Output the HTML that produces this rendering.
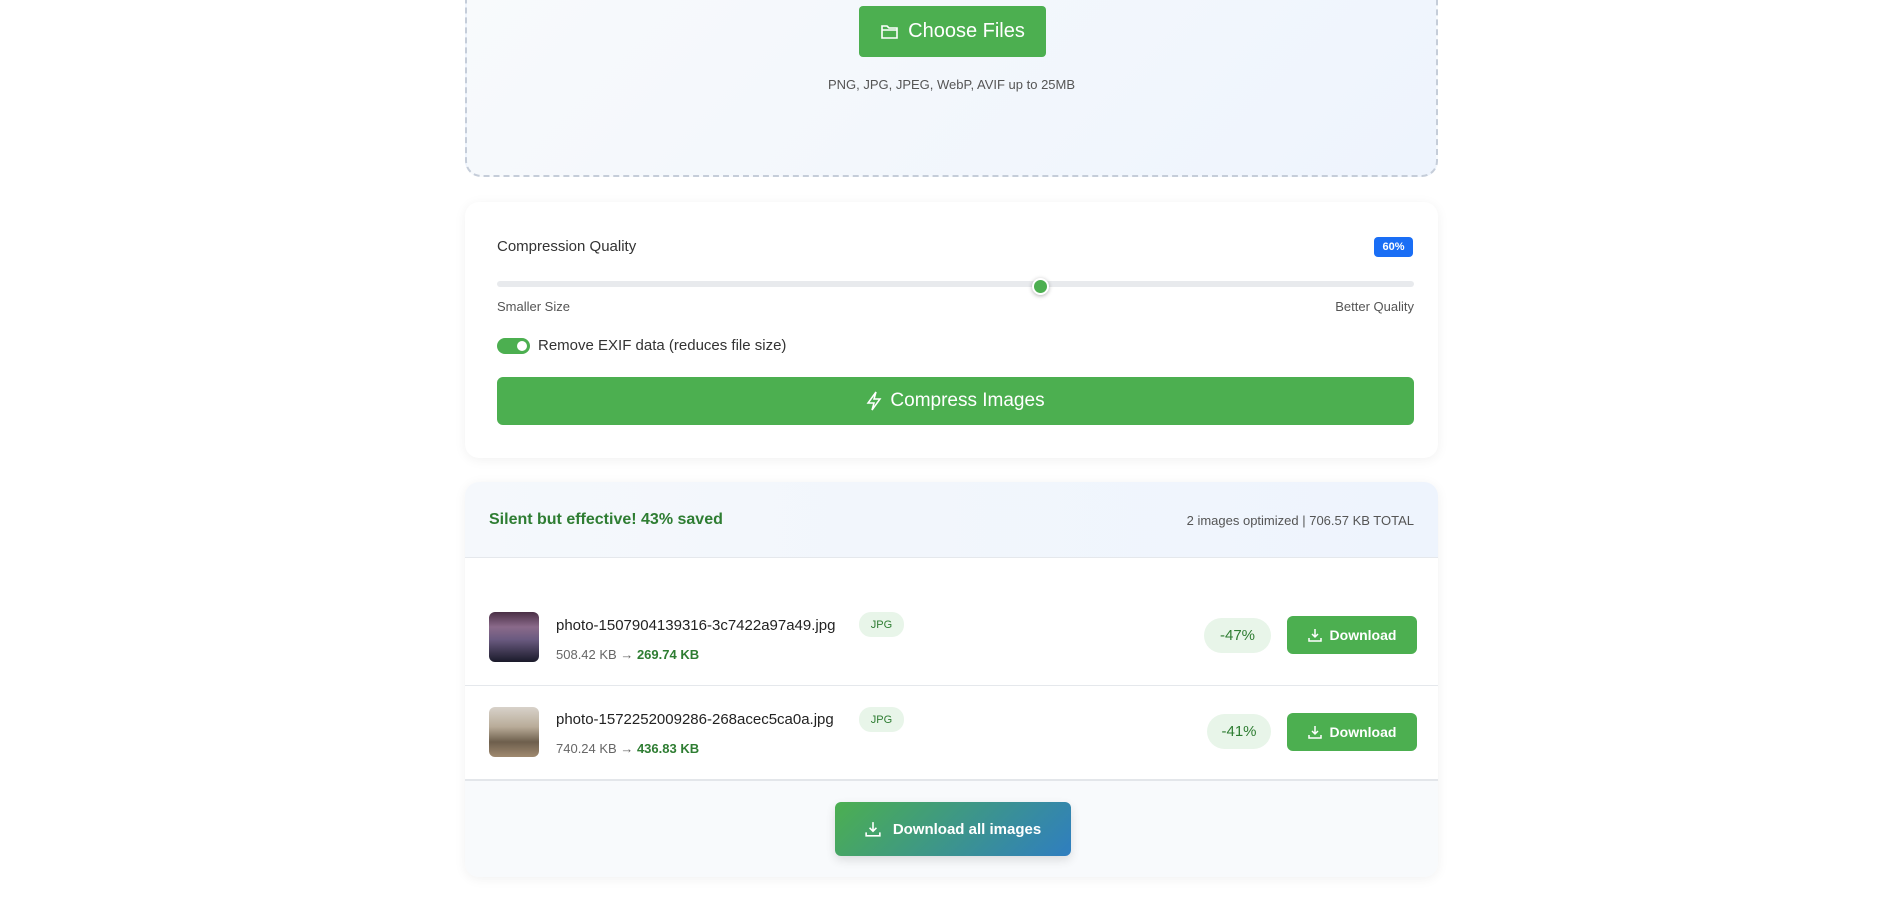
<!DOCTYPE html>
<html><head><meta charset="utf-8"><style>
*{box-sizing:border-box;margin:0;padding:0}
body{width:1900px;height:921px;background:#fff;font-family:"Liberation Sans",sans-serif;position:relative;overflow:hidden;color:#333}
.abs{position:absolute}
.drop{left:465px;top:-40px;width:973px;height:217px;border:2px dashed #c5cdd9;border-radius:16px;background:linear-gradient(135deg,#f8fafc,#eef4fd)}
.choose{left:859px;top:6px;width:187px;height:51px;background:#4caf50;border-radius:4px;color:#fff;font-size:20px;display:flex;align-items:center;justify-content:center;gap:8px}
.fmt{left:465px;width:973px;top:77px;text-align:center;font-size:13px;color:#555}
.card{left:465px;width:973px;background:#fff;border-radius:14px;box-shadow:0 2px 12px rgba(0,0,0,.06)}
.btn{background:#4caf50;color:#fff;border-radius:6px;display:flex;align-items:center;justify-content:center;gap:8px}
</style></head><body>
<div class="abs drop"></div>
<div class="abs choose"><svg width="20" height="18" viewBox="0 0 20 18" fill="none" stroke="#fff" stroke-width="1.6"><path d="M2 3h5l2 2h8v10H2z M2 7h15"/></svg>Choose Files</div>
<div class="abs fmt">PNG, JPG, JPEG, WebP, AVIF up to 25MB</div>

<div class="abs card" style="top:202px;height:256px"></div>
<div class="abs" style="left:497px;top:238px;font-size:15px;color:#333">Compression Quality</div>
<div class="abs" style="left:1374px;top:237px;width:39px;height:20px;background:#1a6ef5;color:#fff;border-radius:4px;font-size:11px;font-weight:bold;display:flex;align-items:center;justify-content:center">60%</div>
<div class="abs" style="left:497px;top:281px;width:917px;height:6px;background:#e8eaed;border-radius:3px"></div>
<div class="abs" style="left:1032px;top:278px;width:17px;height:17px;background:#4caf50;border:2px solid #fff;border-radius:50%;box-shadow:0 1px 4px rgba(0,0,0,.3)"></div>
<div class="abs" style="left:497px;top:299px;font-size:13px;color:#555">Smaller Size</div>
<div class="abs" style="left:1298px;width:116px;text-align:right;top:299px;font-size:13px;color:#555">Better Quality</div>
<div class="abs" style="left:497px;top:338px;width:33px;height:16px;background:#4caf50;border-radius:8px"><div style="position:absolute;right:3px;top:3px;width:10px;height:10px;background:#fff;border-radius:50%"></div></div>
<div class="abs" style="left:538px;top:337px;font-size:15px;color:#333">Remove EXIF data (reduces file size)</div>
<div class="abs btn" style="left:497px;top:377px;width:917px;height:48px;font-size:19px"><svg width="16" height="20" viewBox="0 0 16 20" fill="none" stroke="#fff" stroke-width="1.5"><path d="M10 1L2 12h6l-2 7 8-11H8z"/></svg>Compress Images</div>

<div class="abs card" style="top:482px;height:395px;overflow:hidden">
 <div style="height:76px;background:linear-gradient(90deg,#f5f8fc,#eef4fd);border-bottom:1px solid #e5e8ec;position:relative">
  <div class="abs" style="left:24px;top:29px;font-size:16px;font-weight:bold;color:#2e7d32">Silent but effective! 43% saved</div>
  <div class="abs" style="right:24px;top:31px;font-size:13px;color:#555">2 images optimized | 706.57 KB TOTAL</div>
 </div>
</div>
<div class="abs" style="left:489px;top:612px;width:50px;height:50px;border-radius:6px;background:linear-gradient(180deg,#4a2f45 0%,#8a6a8a 30%,#6a5a80 55%,#1a1a2a 100%)"></div>
<div class="abs" style="left:556px;top:617px;font-size:15px;color:#222">photo-1507904139316-3c7422a97a49.jpg</div>
<div class="abs" style="left:556px;top:647px;font-size:13px;color:#666">508.42 KB → <b style="color:#2e7d32">269.74 KB</b></div>
<div class="abs" style="left:859px;top:612px;width:45px;height:25px;background:#e8f5e9;border-radius:12px;font-size:11px;color:#2e7d32;display:flex;align-items:center;justify-content:center">JPG</div>
<div class="abs" style="left:1204px;top:618px;width:67px;height:35px;background:#e8f5e9;border-radius:18px;font-size:15px;color:#2e7d32;display:flex;align-items:center;justify-content:center">-47%</div>
<div class="abs btn" style="left:1287px;top:616px;width:130px;height:38px;font-size:14px;font-weight:bold"><svg width="14" height="14" viewBox="0 0 14 14" fill="none" stroke="#fff" stroke-width="1.5"><path d="M7 1v8M4 6l3 3 3-3M1 10v3h12v-3"/></svg>Download</div>
<div class="abs" style="left:465px;top:685px;width:973px;height:1px;background:#e5e8ec"></div>

<div class="abs" style="left:489px;top:707px;width:50px;height:50px;border-radius:6px;background:linear-gradient(180deg,#d8d2ca 0%,#b8ab98 40%,#6e5f4d 70%,#a08a70 100%)"></div>
<div class="abs" style="left:556px;top:711px;font-size:15px;color:#222">photo-1572252009286-268acec5ca0a.jpg</div>
<div class="abs" style="left:556px;top:741px;font-size:13px;color:#666">740.24 KB → <b style="color:#2e7d32">436.83 KB</b></div>
<div class="abs" style="left:859px;top:707px;width:45px;height:25px;background:#e8f5e9;border-radius:12px;font-size:11px;color:#2e7d32;display:flex;align-items:center;justify-content:center">JPG</div>
<div class="abs" style="left:1207px;top:714px;width:64px;height:35px;background:#e8f5e9;border-radius:18px;font-size:15px;color:#2e7d32;display:flex;align-items:center;justify-content:center">-41%</div>
<div class="abs btn" style="left:1287px;top:713px;width:130px;height:38px;font-size:14px;font-weight:bold"><svg width="14" height="14" viewBox="0 0 14 14" fill="none" stroke="#fff" stroke-width="1.5"><path d="M7 1v8M4 6l3 3 3-3M1 10v3h12v-3"/></svg>Download</div>
<div class="abs" style="left:465px;top:779px;width:973px;height:98px;background:#f8fafc;border-top:2px solid #e3e6ea;border-radius:0 0 14px 14px"></div>
<div class="abs" style="left:835px;top:802px;width:236px;height:54px;border-radius:6px;background:linear-gradient(135deg,#4caf50,#2f7ec0);color:#fff;font-size:15px;font-weight:bold;display:flex;align-items:center;justify-content:center;gap:12px;box-shadow:0 4px 10px rgba(0,0,0,.12)"><svg width="16" height="16" viewBox="0 0 14 14" fill="none" stroke="#fff" stroke-width="1.4"><path d="M7 1v8M4 6l3 3 3-3M1 10v3h12v-3"/></svg>Download all images</div>
</body></html>
